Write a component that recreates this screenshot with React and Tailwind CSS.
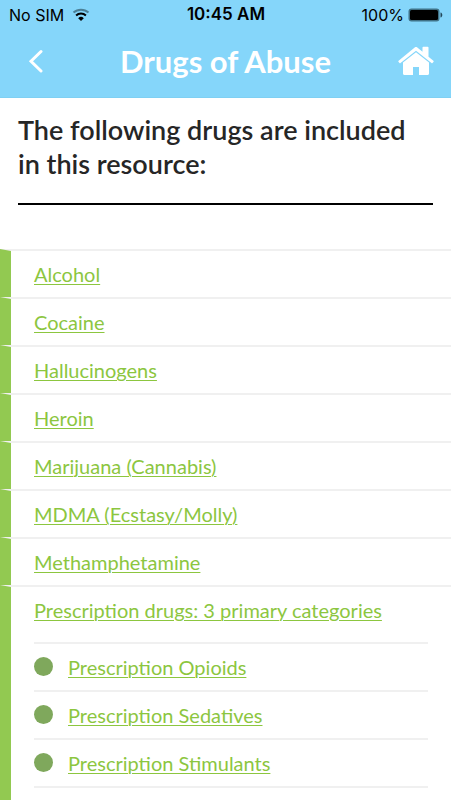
import React from "react";

const drugs = [
  "Alcohol",
  "Cocaine",
  "Hallucinogens",
  "Heroin",
  "Marijuana (Cannabis)",
  "MDMA (Ecstasy/Molly)",
  "Methamphetamine",
];

const prescriptions = [
  "Prescription Opioids",
  "Prescription Sedatives",
  "Prescription Stimulants",
];

const linkClass =
  "text-[20px] leading-6 text-[#8cc63f] underline decoration-1 underline-offset-2";

function WifiIcon() {
  return (
    <svg viewBox="0 0 18 14" className="w-[18px] h-[14px]" fill="none">
      <path d="M1.5 4.6a11 11 0 0 1 15 0" stroke="#4b7f96" strokeWidth="2" />
      <path d="M4.1 7.4a7.2 7.2 0 0 1 9.8 0" stroke="#000" strokeWidth="2" />
      <path d="M9 13L6.2 10.2a4 4 0 0 1 5.6 0z" fill="#000" />
    </svg>
  );
}

function BatteryIcon() {
  return (
    <svg viewBox="0 0 35 14" className="w-[35px] h-[14px]">
      <rect x="0.5" y="0.5" width="31" height="13" rx="3" fill="#3f7186" />
      <rect x="2" y="2" width="28" height="10" rx="1.5" fill="#000" />
      <path d="M32.5 4.5c2.4.4 2.4 4.6 0 5z" fill="#22485a" />
    </svg>
  );
}

function HomeIcon() {
  return (
    <svg viewBox="0 0 36 30" className="w-9 h-[30px]" fill="#fff">
      <path d="M18 6.3L5 16.600v10.900c0 .9.6 1.500 1.500 1.500H15v-8h6v8h8.500c.9 0 1.500-.6 1.500-1.500V16.600z" />
      <path d="M17 1.300c.6-.5 1.400-.5 2 0l5.500 4.500V1.500c0-.5.300-.8.800-.8h4.400c.5 0 .8.300.8.800v9.200l4.900 4c.400.3.400.7.200 1l-1.100 1.300c-.3.300-.7.400-1 .1L18 4.800 2.500 17.100c-.3.300-.7.200-1-.1L.4 15.700c-.2-.3-.2-.7.200-1z" />
    </svg>
  );
}

export default function App() {
  return (
    <div className="min-h-screen bg-white font-['Lato',sans-serif]">
      <header className="bg-[#85d6fa] border-b border-[#7fd0f3]">
        <div className="grid grid-cols-[1fr_auto_1fr] items-center h-[29px] pl-[9px] pr-2 font-['Inter',sans-serif] text-[16px] text-black">
          <div className="flex items-center gap-2">
            <span>No SIM</span>
            <WifiIcon />
          </div>
          <span className="text-[17px] font-semibold">10:45 AM</span>
          <div className="flex items-center justify-end gap-1">
            <span>100%</span>
            <BatteryIcon />
          </div>
        </div>

        <div className="grid grid-cols-[1fr_auto_1fr] items-center h-[68px] px-[17px] pb-1">
          <button
            aria-label="Back"
            className="justify-self-start pl-[11px] pr-2"
          >
            <svg viewBox="0 0 16 24" className="w-4 h-6" fill="none">
              <path
                d="M13 2.500L3 12.300l10 9.700"
                stroke="#fff"
                strokeWidth="3"
                strokeLinecap="round"
              />
            </svg>
          </button>
          <h1 className="text-[31px] leading-10 font-bold text-white">
            Drugs of Abuse
          </h1>
          <button aria-label="Home" className="justify-self-end">
            <HomeIcon />
          </button>
        </div>
      </header>

      <main className="pt-[15px]">
        <div className="mx-[18px] mb-11 pb-[22px] border-b-2 border-black">
          <h2 className="pr-4 text-[27px] leading-[34px] font-semibold text-[#262626]">
            The following drugs are included in this resource:
          </h2>
        </div>

        {/* The thick left border meets the top one at a mitre */}
        <ul>
          {drugs.map((drug) => (
            <li
              key={drug}
              className="h-12 pl-[23px] pt-[11px] border-t-2 border-l-[11px] border-t-[#f0f0f0] border-l-[#92c951]"
            >
              <a href="#" className={linkClass}>
                {drug}
              </a>
            </li>
          ))}
          <li className="px-[23px] pt-[11px] pb-8 border-t-2 border-l-[11px] border-t-[#f0f0f0] border-l-[#92c951]">
            <a href="#" className={linkClass}>
              Prescription drugs: 3 primary categories
            </a>
            <ul className="mt-[18px] border-b-2 border-[#f0f0f0]">
              {prescriptions.map((item) => (
                <li
                  key={item}
                  className="flex items-center gap-[15px] h-12 pb-px border-t-2 border-[#f0f0f0]"
                >
                  <span className="w-[19px] h-[19px] rounded-full bg-[#7fa85c]"></span>
                  <a href="#" className={linkClass}>
                    {item}
                  </a>
                </li>
              ))}
            </ul>
          </li>
        </ul>
      </main>
    </div>
  );
}
